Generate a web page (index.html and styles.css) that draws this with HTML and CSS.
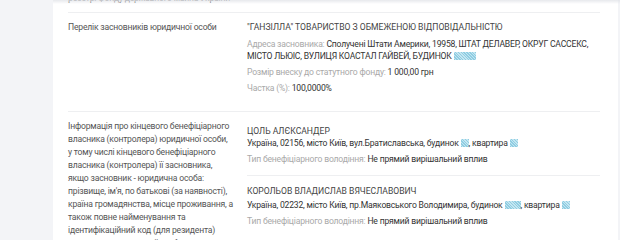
FILE: index.html
```html
<!DOCTYPE html>
<html lang="uk">
<head>
<meta charset="utf-8">
<link rel="stylesheet" href="styles.css">
</head>
<body>
<div class="page">
  <aside class="side"></aside>
  <main class="card">
    <div class="top-line">реєстрі Фонду державного майна України</div>
    <section class="row row-founders">
      <div class="label">Перелік засновників юридичної особи</div>
      <div class="value">
        <p class="title">"ГАНЗІЛЛА" ТОВАРИСТВО З ОБМЕЖЕНОЮ ВІДПОВІДАЛЬНІСТЮ</p>
        <p class="field"><span class="key">Адреса засновника:</span> Сполучені Штати Америки, 19958, ШТАТ ДЕЛАВЕР, ОКРУГ САССЕКС, МІСТО ЛЬЮІС, ВУЛИЦЯ КОАСТАЛ ГАЙВЕЙ, БУДИНОК <span class="mask w22"></span></p>
        <p class="field"><span class="key">Розмір внеску до статутного фонду:</span> 1 000,00 грн</p>
        <p class="field"><span class="key">Частка (%):</span> 100,0000%</p>
      </div>
    </section>
    <section class="row">
      <div class="label">Інформація про кінцевого бенефіціарного власника (контролера) юридичної особи, у тому числі кінцевого бенефіціарного власника (контролера) її засновника, якщо засновник - юридична особа: прізвище, ім'я, по батькові (за наявності), країна громадянства, місце проживання, а також повне найменування та ідентифікаційний код (для резидента) засновника юридичної особи, в якому ця особа є кінцевим бенефіціарним власником</div>
      <div class="value">
        <div class="person">
          <p class="title">ЦОЛЬ АЛЄКСАНДЕР</p>
          <p class="addr">Україна, 02156, місто Київ, вул.Братиславська, будинок <span class="mask w8"></span>, квартира <span class="mask w8"></span></p>
          <p class="field"><span class="key">Тип бенефіціарного володіння:</span> Не прямий вирішальний вплив</p>
        </div>
        <div class="person">
          <p class="title">КОРОЛЬОВ ВЛАДИСЛАВ ВЯЧЕСЛАВОВИЧ</p>
          <p class="addr">Україна, 02232, місто Київ, пр.Маяковського Володимира, будинок <span class="mask w16"></span>, квартира <span class="mask w8"></span></p>
          <p class="field"><span class="key">Тип бенефіціарного володіння:</span> Не прямий вирішальний вплив</p>
        </div>
      </div>
    </section>
  </main>
  <aside class="side-right"></aside>
</div>
<div class="top-shade"></div>
</body>
</html>
```

FILE: styles.css
```css
* { box-sizing: border-box; }
html, body { margin: 0; padding: 0; }
body {
  background: #f3f4f7;
  font-family: Roboto, "Noto Sans", sans-serif;
  font-size: 8.6px;
  letter-spacing: -0.2px;
  color: #3a3a3a;
  overflow: hidden;
  height: 240px;
}
p { margin: 0; }
.page {
  display: grid;
  grid-template-columns: 53px 565px 1fr;
  height: 240px;
}
.card {
  background: #fff;
  padding: 0 18px 0 15px;
  margin-top: -8px;
}
.top-line {
  line-height: 13px;
  height: 21px;
  color: #666;
  border-bottom: 1px solid #eeeff1;
}
.row {
  display: grid;
  grid-template-columns: 179px 1fr;
  padding: 8px 0 13px;
  border-bottom: 1px solid #eeeff1;
}
.label {
  color: #555;
  line-height: 13px;
  padding-right: 14px;
}
.value { color: #333; }
.title { color: #444; line-height: 13px; margin-bottom: 3.5px; letter-spacing: 0; }
.field { line-height: 12px; margin-bottom: 4px; }
.key { color: #a9a9a9; }
.person .title { line-height: 12.5px; margin-bottom: 0; }
.addr { line-height: 12px; margin-bottom: 4px; }
.person { padding: 5px 0 5.5px; }
.person + .person { border-top: 1px solid #eeeff1; padding-top: 9px; }
.person + .person .title { margin-bottom: 1.5px; }
.mask {
  display: inline-block;
  height: 8px;
  vertical-align: -1px;
  background-color: #c4e6f1;
  background-image: repeating-linear-gradient(45deg, #8fcde2 0 1px, transparent 1px 2px);
}
.w8 { width: 8px; }
.w16 { width: 16px; }
.w22 { width: 22px; }
.top-shade {
  position: absolute;
  top: 0;
  left: 53px;
  right: 0;
  height: 4px;
  background: linear-gradient(rgba(225, 227, 232, 0.8), rgba(255, 255, 255, 0));
  pointer-events: none;
}
```
